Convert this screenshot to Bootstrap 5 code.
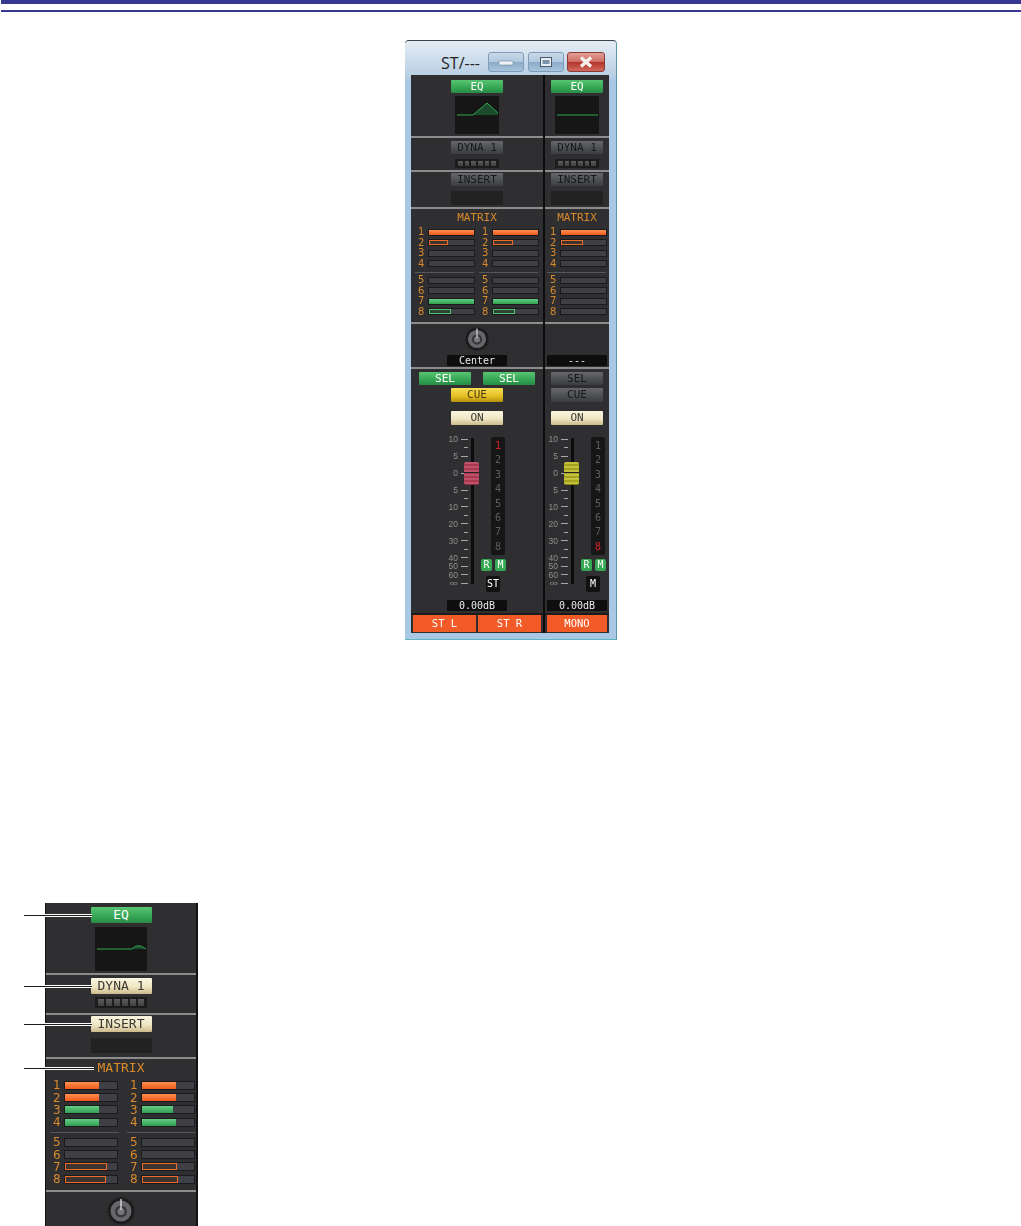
<!DOCTYPE html>
<html lang="en">
<head>
  <meta charset="UTF-8">
  <meta name="viewport" content="width=device-width, initial-scale=1.0">
  <title>ST/--- channel window</title>
  <link href="https://cdn.jsdelivr.net/npm/bootstrap@5.3.2/dist/css/bootstrap.min.css" rel="stylesheet">
  <style>
    body {
      background: #fff;
      font-family: "DejaVu Sans Mono", "Liberation Mono", monospace;
      overflow: hidden;
    }
    .doc-page { height: 1226px; overflow: hidden; }
    .rule-thick { height: 4px; margin-left: 1px; background: #37388f; }
    .rule-thin { height: 2px; margin: 6px 0 0 1px; background: #37388f; }

    /* channel window */
    .ch-window {
      width: 212px;
      height: 600px;
      margin: 28px 0 0 405px;
      border-top: 1px solid #39424a;
      border-radius: 4px 4px 0 0;
      border-bottom: 1px solid #5fb7bd;
      border-right: 1px solid #5d9aa8;
      background: linear-gradient(180deg, #e4edf4 0, #b9d0e4 34px, #a9c8e6 40px);
      padding-left: 6px;
    }
    .ch-title { height: 34px; padding-right: 11px; }
    .ch-title-text { font: 16px "Open Sans", sans-serif; color: #222; margin: 11px 8px 0 0; }
    .cap-btn {
      width: 36px;
      height: 20px;
      margin-top: 11px;
      border: 1px solid #7f9db8;
      border-radius: 3px;
      background: linear-gradient(180deg, #c9d9e8 0, #b0c8de 48%, #8aaccb 52%, #a9c4dc 100%);
    }
    .cap-close {
      width: 38px;
      border-color: #8c3a36;
      background: linear-gradient(180deg, #e2a097 0, #cf6d63 48%, #b5342c 52%, #cf6a5c 100%);
    }
    .cap-gap { margin-right: 4px; }
    .cap-gap-tight { margin-right: 3px; }
    .ch-panel {
      width: 198px;
      height: 558px;
      background: #2f2f31;
      overflow: hidden;
      filter: blur(.3px);
    }
    .ch-col-a { width: 132px; flex: none; }
    .ch-col-b { width: 64px; flex: none; }
    .ch-divider { width: 2px; flex: none; background: #0c0c0c; }

    .sec { border-bottom: 2px solid #8c8c8c; }
    .sec-eq { height: 63px; padding-top: 5px; }
    .sec-dyna { height: 34px; padding-top: 3px; }
    .sec-insert { height: 37px; padding-top: 1px; }
    .sec-matrix { height: 115px; }
    .sec-pan { height: 45px; padding-top: 2px; }
    .sec-fader { height: 246px; padding-top: 3px; border-bottom-color: #1b1b1b; }

    .strip-btn {
      display: block;
      width: 52px;
      height: 13px;
      padding: 0;
      border: 0;
      border-radius: 1px;
      font-size: 11px;
      line-height: 13px;
      white-space: nowrap;
    }
    .strip-btn.tone-green { background: linear-gradient(180deg, #58c572, #2f9f50 70%, #2b8a47); color: #fff; }
    .strip-btn.tone-grey { background: linear-gradient(180deg, #66686c, #4b4d51 60%, #3b3d40); color: #16181a; }
    .strip-btn.tone-cream { background: linear-gradient(180deg, #fbf6e0, #efe6c4 55%, #cdb98a); color: #3a3a34; }
    .strip-btn.tone-yellow { background: linear-gradient(180deg, #f6de55, #e3bd22 60%, #b2900e); color: #4a3d10; }
    .eq-graph { display: block; width: 44px; height: 38px; margin-top: 3px; background: #161616; }
    .dyn-meter { width: 44px; height: 9px; margin-top: 5px; padding: 2px 3px; gap: 2px; background: #1c1c1c; }
    .dyn-cell { flex: 1; background: linear-gradient(180deg, #5a5c5f, #3e3f41); }
    .ins-box { width: 52px; height: 14px; margin-top: 5px; background: #222223; }

    .mx-label { height: 18px; font-size: 11px; line-height: 18px; color: #d98a2c; text-align: center; }
    .mx-grid { padding-left: 4px; }
    .mx-sub { width: 65px; }
    .ch-col-b .mx-grid { padding-left: 2px; }
    .mx-row { height: 10.5px; align-items: center; }
    .mx-num { width: 14px; padding-left: 3px; font: 10px/10px "DejaVu Sans", sans-serif; color: #d98a2c; }
    .mx-bar {
      width: 45px;
      height: 5px;
      background: #3f4045;
      box-shadow: 0 0 0 1px #1a1a1c;
    }
    .mx-fill { height: 100%; }
    .fill-orange { background: linear-gradient(180deg, #ff9150, #f0591d); }
    .fill-green { background: linear-gradient(180deg, #66cc85, #2f9f52); }
    .line-orange { border: 1px solid #ee6c2a; background: #3d3430; }
    .line-green { border: 1px solid #4fc070; background: #2e4535; }
    .mx-split { width: 59px; height: 1px; margin: 3px 0 2px; background: #55565a; }

    .pan-knob { display: block; width: 26px; height: 26px; }
    .pan-spacer { height: 26px; }
    .val-box {
      width: 60px;
      height: 11px;
      background: #0e0e0e;
      color: #e8e8e8;
      font-size: 10px;
      line-height: 11px;
      text-align: center;
      border-radius: 1px;
    }
    .pan-val { margin-top: 3px; }
    .sel-row { gap: 12px; }
    .cue-btn { margin-top: 3px; height: 14px; line-height: 14px; }
    .on-btn { margin-top: 9px; height: 14px; line-height: 14px; }

    .fader-group { width: 62px; margin: 10px auto 0; }
    .fd-scale { width: 22px; }
    .fd-mark {
      height: 8.47px;
      justify-content: flex-end;
      align-items: center;
      gap: 3px;
      font: 8.5px/8px "Liberation Sans", sans-serif;
      color: #8f8f8f;
      white-space: nowrap;
    }
    .fd-inf { display: inline-block; transform: scaleX(1.4); transform-origin: right center; }
    .fd-tick { width: 7px; height: 1px; background: #a8a8a8; flex: none; }
    .fd-tick-minor { width: 4px; }
    .fd-track-wrap { position: relative; width: 3px; margin-left: 3px; height: 149px; }
    .fd-track { width: 3px; height: 146px; margin-top: 3px; background: #0c0c0c; }
    .fd-cap {
      position: absolute;
      left: -7px;
      top: 27px;
      width: 15px;
      height: 23px;
      border-radius: 2px;
      background: repeating-linear-gradient(180deg, var(--cap-a) 0, var(--cap-a) 2px, var(--cap-b) 2px, var(--cap-b) 4px);
      box-shadow: inset 0 -1px 0 rgba(0,0,0,.2);
    }
    .fd-cap::after { content: ""; position: absolute; left: 0; right: 0; top: 10px; height: 1px; background: #222; }
    .cap-red { --cap-a: #c0516a; --cap-b: #a83a50; }
    .cap-yellow { --cap-a: #c3c13a; --cap-b: #a3a120; }
    .fd-right { width: 27px; margin-left: 7px; padding-top: 2px; }
    .lvl-meter {
      width: 14px;
      height: 118px;
      margin-left: 10px;
      border-radius: 2px;
      background: #161616;
      font: 10px/14.4px "DejaVu Sans Mono", monospace;
      color: #5f5f5f;
      text-align: center;
      padding-top: 2px;
    }
    .lvl-hot { color: #d8232a; }
    .rm-row { gap: 3px; margin-top: 4px; }
    .rm-btn {
      width: 11px;
      height: 12px;
      border-radius: 2px;
      background: #35a853;
      color: #fff;
      font-size: 10px;
      line-height: 12px;
      text-align: center;
    }
    .bus-tag {
      width: 14px;
      height: 16px;
      margin: 5px 0 0 5px;
      border-radius: 2px;
      background: #111;
      color: #fff;
      font-size: 10px;
      line-height: 16px;
      text-align: center;
    }
    .db-val { margin-top: 8px; }

    .name-row { height: 17px; gap: 2px; padding: 0 2px; }
    .name-cell {
      flex: 1;
      background: #f25a27;
      color: #fff;
      font-size: 10.5px;
      line-height: 17px;
      text-align: center;
      white-space: pre;
    }

    /* enlarged detail strip */
    .zoom-wrap { position: relative; margin-top: 263px; height: 323px; }
    .zoom-strip {
      width: 153px;
      height: 340px;
      margin-left: 45px;
      border-left: 1px solid #111;
      border-right: 2px solid #111;
      background: #2f2f31;
      filter: blur(.3px);
    }
    .zoom-strip .strip-btn { width: 61px; height: 16px; font-size: 13px; line-height: 16px; }
    .zoom-strip .sec-eq { height: 72px; padding-top: 4px; }
    .zoom-strip .sec-dyna { height: 40px; padding-top: 3px; }
    .zoom-strip .sec-insert { height: 44px; padding-top: 1px; }
    .zoom-strip .sec-matrix { height: 133px; }
    .zoom-strip .eq-graph { width: 52px; height: 44px; margin-top: 4px; }
    .zoom-strip .dyn-meter { width: 52px; height: 11px; margin-top: 3px; }
    .zoom-strip .ins-box { width: 61px; height: 15px; margin-top: 6px; }
    .zoom-strip .mx-label { height: 18px; font-size: 13px; line-height: 18px; }
    .zoom-strip .mx-grid { padding-left: 4px; margin-top: 2px; }
    .zoom-strip .mx-sub { width: 77px; flex: none; }
    .zoom-strip .mx-row { height: 12.4px; }
    .zoom-strip .mx-num { width: 14px; padding-left: 3px; font-size: 12px; line-height: 12px; }
    .zoom-strip .mx-bar { width: 52px; height: 7px; margin-left: 1px; }
    .zoom-strip .mx-split { width: 69px; margin: 3.5px 0 2.9px; }
    .zoom-strip .pan-knob { width: 30px; height: 30px; }
    .callout {
      position: absolute;
      left: 24px;
      height: 1px;
      background: #1a1a1a;
      box-shadow: 0 -1px 0 #fff, 0 1px 0 #fff;
    }
  </style>
</head>
<body>
  <div class="doc-page">
    <div class="rule-thick"></div>
    <div class="rule-thin"></div>

    <div class="ch-window">
      <div class="ch-title d-flex justify-content-end align-items-start">
        <span class="ch-title-text">ST/---</span>
        <div class="cap-btn cap-gap d-flex justify-content-center align-items-center">
          <svg width="16" height="8" viewBox="0 0 16 8"><rect x="1" y="3" width="14" height="4" rx="1" fill="#eef2f6" stroke="#6f8296" stroke-width=".6"/></svg>
        </div>
        <div class="cap-btn cap-gap-tight d-flex justify-content-center align-items-center">
          <svg width="14" height="12" viewBox="0 0 14 12"><rect x="1.5" y="1.5" width="11" height="9" fill="#e6edf3" stroke="#4a5a6c" stroke-width="1"/><rect x="3.5" y="4" width="7" height="4" fill="#7d93ab"/></svg>
        </div>
        <div class="cap-btn cap-close d-flex justify-content-center align-items-center">
          <svg width="16" height="12" viewBox="0 0 16 12"><path d="M3 1.5 L13 10.5 M13 1.5 L3 10.5" stroke="#f4f1ee" stroke-width="3.4" fill="none"/></svg>
        </div>
      </div>

      <div class="ch-panel d-flex">
        <!-- stereo channel -->
        <div class="ch-col-a">
          <div class="sec sec-eq d-flex flex-column align-items-center">
            <button class="btn strip-btn tone-green">EQ</button>
            <svg class="eq-graph" viewBox="0 0 44 38"><path d="M18 19 L32 7 L43 17 L43 19Z" fill="#1c4a2c"/><path d="M2 19 H18 L32 7 L43 17" fill="none" stroke="#2fa84f" stroke-width="1"/></svg>
          </div>
          <div class="sec sec-dyna d-flex flex-column align-items-center">
            <button class="btn strip-btn tone-grey">DYNA 1</button>
            <div class="dyn-meter d-flex" data-cells="6"></div>
          </div>
          <div class="sec sec-insert d-flex flex-column align-items-center">
            <button class="btn strip-btn tone-grey">INSERT</button>
            <div class="ins-box"></div>
          </div>
          <div class="sec sec-matrix">
            <div class="mx-label">MATRIX</div>
            <div class="mx-grid d-flex" data-matrix="small-st"></div>
          </div>
          <div class="sec sec-pan d-flex flex-column align-items-center">
            <svg class="pan-knob" viewBox="0 0 30 30"><use href="#knob"/></svg>
            <div class="val-box pan-val">Center</div>
          </div>
          <div class="sec sec-fader d-flex flex-column align-items-center">
            <div class="sel-row d-flex">
              <button class="btn strip-btn tone-green">SEL</button>
              <button class="btn strip-btn tone-green">SEL</button>
            </div>
            <button class="btn strip-btn tone-yellow cue-btn">CUE</button>
            <button class="btn strip-btn tone-cream on-btn">ON</button>
            <div class="fader-group d-flex">
              <div class="fd-scale" data-scale></div>
              <div class="fd-track-wrap"><div class="fd-track"></div><div class="fd-cap cap-red"></div></div>
              <div class="fd-right">
                <div class="lvl-meter" data-hot="1"></div>
                <div class="rm-row d-flex"><div class="rm-btn">R</div><div class="rm-btn">M</div></div>
                <div class="bus-tag">ST</div>
              </div>
            </div>
            <div class="val-box db-val">0.00dB</div>
          </div>
          <div class="name-row d-flex">
            <div class="name-cell">ST L</div>
            <div class="name-cell">ST R</div>
          </div>
        </div>

        <div class="ch-divider"></div>

        <!-- mono channel -->
        <div class="ch-col-b">
          <div class="sec sec-eq d-flex flex-column align-items-center">
            <button class="btn strip-btn tone-green">EQ</button>
            <svg class="eq-graph" viewBox="0 0 44 38"><path d="M2 19 H43" fill="none" stroke="#2fa84f" stroke-width="1"/></svg>
          </div>
          <div class="sec sec-dyna d-flex flex-column align-items-center">
            <button class="btn strip-btn tone-grey">DYNA 1</button>
            <div class="dyn-meter d-flex" data-cells="6"></div>
          </div>
          <div class="sec sec-insert d-flex flex-column align-items-center">
            <button class="btn strip-btn tone-grey">INSERT</button>
            <div class="ins-box"></div>
          </div>
          <div class="sec sec-matrix">
            <div class="mx-label">MATRIX</div>
            <div class="mx-grid d-flex" data-matrix="small-mono"></div>
          </div>
          <div class="sec sec-pan d-flex flex-column align-items-center">
            <div class="pan-spacer"></div>
            <div class="val-box pan-val">---</div>
          </div>
          <div class="sec sec-fader d-flex flex-column align-items-center">
            <button class="btn strip-btn tone-grey">SEL</button>
            <button class="btn strip-btn tone-grey cue-btn">CUE</button>
            <button class="btn strip-btn tone-cream on-btn">ON</button>
            <div class="fader-group d-flex">
              <div class="fd-scale" data-scale></div>
              <div class="fd-track-wrap"><div class="fd-track"></div><div class="fd-cap cap-yellow"></div></div>
              <div class="fd-right">
                <div class="lvl-meter" data-hot="8"></div>
                <div class="rm-row d-flex"><div class="rm-btn">R</div><div class="rm-btn">M</div></div>
                <div class="bus-tag">M</div>
              </div>
            </div>
            <div class="val-box db-val">0.00dB</div>
          </div>
          <div class="name-row d-flex">
            <div class="name-cell">MONO</div>
          </div>
        </div>
      </div>
    </div>

    <div class="zoom-wrap">
      <div class="zoom-strip">
        <div class="sec sec-eq d-flex flex-column align-items-center">
          <button class="btn strip-btn tone-green">EQ</button>
          <svg class="eq-graph" viewBox="0 0 52 44"><path d="M37 22 L41 19 H46 L51 22Z" fill="#1c4a2c"/><path d="M2 22 H37 L41 19 H46 L51 22" fill="none" stroke="#2fa84f" stroke-width="1"/></svg>
        </div>
        <div class="sec sec-dyna d-flex flex-column align-items-center">
          <button class="btn strip-btn tone-cream">DYNA 1</button>
          <div class="dyn-meter d-flex" data-cells="6"></div>
        </div>
        <div class="sec sec-insert d-flex flex-column align-items-center">
          <button class="btn strip-btn tone-cream">INSERT</button>
          <div class="ins-box"></div>
        </div>
        <div class="sec sec-matrix">
          <div class="mx-label">MATRIX</div>
          <div class="mx-grid d-flex" data-matrix="large"></div>
        </div>
        <div class="d-flex justify-content-center pt-1">
          <svg class="pan-knob" viewBox="0 0 30 30"><use href="#knob"/></svg>
        </div>
      </div>
      <div class="callout" style="top: 12px; width: 68px"></div>
      <div class="callout" style="top: 83px; width: 68px"></div>
      <div class="callout" style="top: 121px; width: 68px"></div>
      <div class="callout" style="top: 165px; width: 70px"></div>
    </div>
  </div>

  <svg width="0" height="0" class="d-block position-absolute">
    <defs>
      <g id="knob">
        <circle cx="15" cy="15" r="13.5" fill="#1a1a1b" stroke="#2a2a2c" stroke-width="2" stroke-dasharray="2.4 1.8"/>
        <circle cx="15" cy="15" r="10.5" fill="#66676a"/>
        <circle cx="15" cy="15.5" r="6" fill="#38383a"/>
        <circle cx="15" cy="15.5" r="3.5" fill="#77787b"/>
        <path d="M15 3 V14" stroke="#d8d8d8" stroke-width="1.4"/>
      </g>
    </defs>
  </svg>

  <script>
    // [colour, kind, percent] per send, kind: f = solid, l = outlined, 0 = empty
    const O = 'orange', G = 'green';
    const matrices = {
      'small-st': [
        [[O,'f',100],[O,'l',43],0,0, 0,0,[G,'f',100],[G,'l',48]],
        [[O,'f',100],[O,'l',45],0,0, 0,0,[G,'f',100],[G,'l',48]]
      ],
      'small-mono': [
        [[O,'f',100],[O,'l',48],0,0, 0,0,0,0]
      ],
      'large': [
        [[O,'f',65],[O,'f',65],[G,'f',65],[G,'f',65], 0,0,[O,'l',80],[O,'l',78]],
        [[O,'f',65],[O,'f',65],[G,'f',60],[G,'f',65], 0,0,[O,'l',68],[O,'l',70]]
      ]
    };

    document.querySelectorAll('[data-matrix]').forEach(grid => {
      matrices[grid.dataset.matrix].forEach(sends => {
        const sub = document.createElement('div');
        sub.className = 'mx-sub';
        sends.forEach((send, i) => {
          if (i === 4) {
            const split = document.createElement('div');
            split.className = 'mx-split';
            sub.appendChild(split);
          }
          let fill = '';
          if (send) {
            const cls = send[1] === 'f' ? 'fill-' + send[0] : 'line-' + send[0];
            fill = `<div class="mx-fill ${cls}" style="width: ${send[2]}%"></div>`;
          }
          const row = document.createElement('div');
          row.className = 'mx-row d-flex';
          row.innerHTML = `<div class="mx-num">${i + 1}</div><div class="mx-bar">${fill}</div>`;
          sub.appendChild(row);
        });
        grid.appendChild(sub);
      });
    });

    document.querySelectorAll('[data-cells]').forEach(strip => {
      for (let i = 0; i < +strip.dataset.cells; i++) {
        const cell = document.createElement('div');
        cell.className = 'dyn-cell';
        strip.appendChild(cell);
      }
    });

    const marks = ['10','','5','','0','','5','','10','','20','','30','','40','50','60','\u221e'];
    document.querySelectorAll('[data-scale]').forEach(scale => {
      marks.forEach(m => {
        const row = document.createElement('div');
        row.className = 'fd-mark d-flex';
        const label = m === '\u221e' ? `<span class="fd-inf">${m}</span>` : `<span>${m}</span>`;
        row.innerHTML = m
          ? `${label}<div class="fd-tick"></div>`
          : '<div class="fd-tick fd-tick-minor"></div>';
        scale.appendChild(row);
      });
    });

    document.querySelectorAll('[data-hot]').forEach(meter => {
      for (let i = 1; i <= 8; i++) {
        const d = document.createElement('div');
        d.textContent = i;
        if (i === +meter.dataset.hot) d.className = 'lvl-hot';
        meter.appendChild(d);
      }
    });
  </script>
  <script src="https://cdn.jsdelivr.net/npm/bootstrap@5.3.2/dist/js/bootstrap.bundle.min.js"></script>
</body>
</html>
